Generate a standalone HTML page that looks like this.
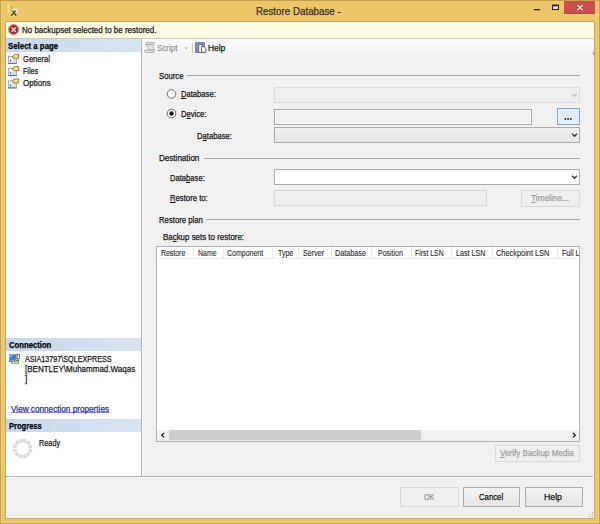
<!DOCTYPE html>
<html><head><meta charset="utf-8">
<style>
*{margin:0;padding:0;box-sizing:border-box}
html,body{width:600px;height:524px;overflow:hidden;background:#edc66a}
body{position:relative;font-family:"Liberation Sans",sans-serif}
.a{position:absolute}
.tx{position:absolute;white-space:nowrap;line-height:1;-webkit-text-stroke:0.25px currentColor;transform-origin:0 0;font-family:"Liberation Sans",sans-serif}
u{text-decoration:underline;text-underline-offset:1px}
</style></head><body>
<!-- frame -->
<div class="a" style="left:0;top:0;width:600px;height:524px;border:1px solid #c4a04c;background:#edc66a"></div>
<div class="a" style="left:1px;top:1px;width:598px;height:522px;border:1px solid #f1cf78;border-top:none"></div>
<div class="a" style="left:5px;top:21px;width:590px;height:498px;border:1px solid #c2a872"></div>
<!-- window buttons -->
<div class="a" style="left:564px;top:1px;width:31px;height:13px;background:#c94e4c;border-bottom:1px solid #b8443c"></div>
<svg class="a" style="left:0;top:0" width="600" height="21">
  <path d="M577.6 5.2 L582.6 10.2 M582.6 5.2 L577.6 10.2" stroke="#fff" stroke-width="1.1"/>
  <rect x="552.5" y="5.3" width="6" height="4.3" fill="#f2dc9a" stroke="#1e1a14" stroke-width="1"/>
  <rect x="552" y="4.7" width="7" height="1.5" fill="#1e1a14"/>
  <rect x="534" y="9" width="6" height="1.3" fill="#1e1a14"/>
  <!-- app icon -->
  <rect x="7.4" y="4.6" width="5.2" height="7.6" rx="1" fill="#f4e08e"/>
  <rect x="10.2" y="5" width="2.4" height="7" fill="#d9b848"/>
  <circle cx="15.2" cy="10.6" r="2.7" fill="#e6e4d8" opacity="0.85"/>
  <path d="M11.2 15.6 L15.6 10.6 M12.6 10.8 L16.2 15.6" stroke="#3a3024" stroke-width="1.1"/>
</svg>
<!-- content -->
<div class="a" style="left:6px;top:22px;width:588px;height:496px;background:#f0f0f0"></div>
<!-- message bar -->
<div class="a" style="left:6px;top:22px;width:588px;height:16px;background:#fefde2"></div>
<div class="a" style="left:6px;top:38px;width:588px;height:1px;background:#c8c8c0"></div>
<svg class="a" style="left:7px;top:23px" width="14" height="14">
  <circle cx="6.6" cy="6.6" r="5.1" fill="#a8262f" stroke="#cf9a9a" stroke-width="1.1"/>
  <path d="M4.5 4.5 L8.7 8.7 M8.7 4.5 L4.5 8.7" stroke="#fbe6e6" stroke-width="1.3"/>
</svg>
<!-- left panel -->
<div class="a" style="left:6px;top:39px;width:135px;height:437px;background:#fff"></div>
<div class="a" style="left:141px;top:39px;width:1px;height:437px;background:#b4b4b4"></div>
<div class="a" style="left:142px;top:58px;width:1px;height:418px;background:#f8f8f8"></div>
<div class="a" style="left:6px;top:39px;width:135px;height:13px;background:linear-gradient(90deg,#c8d8eb,#d9e4f1)"></div>
<div class="a" style="left:6px;top:338px;width:135px;height:13px;background:linear-gradient(90deg,#c8d8eb,#d9e4f1)"></div>
<div class="a" style="left:6px;top:419px;width:135px;height:13px;background:linear-gradient(90deg,#c8d8eb,#d9e4f1)"></div>
<!-- page icons -->
<svg class="a" style="left:0;top:0" width="142" height="476">
  <g id="pi">
    <rect x="8.5" y="56.3" width="8" height="7.2" fill="#f6f8fc" stroke="#9a9aa8" stroke-width="0.8"/>
    <rect x="9.2" y="60" width="6.6" height="2.8" fill="#d6dcec"/>
    <rect x="8.3" y="62.9" width="8.4" height="1" fill="#6a6a80"/>
    <rect x="10" y="59.5" width="1" height="2.5" fill="#7a7a90"/>
    <path d="M12 57.2 L14.2 54.6 L18.8 54.3 L18.8 58.2 L16.2 58.6 L14.6 59 Z" fill="#e2d070" stroke="#6e6020" stroke-width="0.7"/>
    <path d="M14.4 55.6 L17.6 55.5 L16.2 57.2 Z" fill="#fff6b0"/>
  </g>
  <use href="#pi" y="12.2"/>
  <use href="#pi" y="24.5"/>
  <!-- selected highlight around General -->
  <rect x="21" y="54.5" width="30" height="9.5" fill="none" stroke="#e8eef4" stroke-width="0.8"/>
  <!-- connection icon -->
  <defs><linearGradient id="mg" x1="0" y1="0" x2="1" y2="1"><stop offset="0" stop-color="#9cc0f4"/><stop offset="0.5" stop-color="#3f74d4"/><stop offset="1" stop-color="#6890d8"/></linearGradient></defs>
  <rect x="9.6" y="354.4" width="6.6" height="5.8" fill="url(#mg)" stroke="#6a86b8" stroke-width="0.6"/>
  <rect x="9.4" y="360.2" width="7.2" height="1.5" fill="#eef0f6" stroke="#50505a" stroke-width="0.6"/>
  <rect x="17.1" y="354.3" width="2.5" height="4.6" fill="#fafafa" stroke="#4a4a4a" stroke-width="0.7"/>
  <path d="M11.6 361.8 L11.6 363.2 L18.6 363.2 L18.6 359.6" fill="none" stroke="#4aa84a" stroke-width="1"/>
  <circle cx="17.8" cy="360.4" r="0.9" fill="#2a7a2a"/>
  <!-- spinner -->
  <circle cx="22.6" cy="448.6" r="8" fill="none" stroke="#d9d9d9" stroke-width="3.8" stroke-dasharray="3.29 0.9" transform="rotate(-86.8 22.6 448.6)"/>
</svg>
<!-- toolbar -->
<div class="a" style="left:142px;top:39px;width:452px;height:19px;background:linear-gradient(#fdfdfd,#f0f0f0)"></div>
<svg class="a" style="left:140px;top:38px" width="100" height="20">
  <!-- script icon -->
  <path d="M5.6 6.2 L12 6.2 L14.6 12 L9.6 12 Z" fill="#e6e6e6" stroke="#ababab" stroke-width="0.9"/>
  <rect x="6.2" y="4.4" width="8.4" height="2.2" rx="1.1" fill="#e2e2e2" stroke="#a4a4a4" stroke-width="0.9"/>
  <rect x="4.4" y="12" width="9.8" height="2.4" rx="1.2" fill="#e2e2e2" stroke="#a4a4a4" stroke-width="0.9"/>
  <path d="M44.5 9.5 L48 9.5 L46.25 11.2 Z" fill="#a0a0a0"/>
  <rect x="52" y="5" width="1" height="9.7" fill="#c4c4c4"/>
  <!-- help icon -->
  <rect x="55.6" y="4.6" width="8.8" height="10" fill="#8c8ccc" stroke="#6a6aa8" stroke-width="0.8"/>
  <rect x="58.8" y="6.4" width="3.6" height="8" fill="#fff" stroke="#505070" stroke-width="0.7"/>
  <path d="M61.5 8.6 L64 8.6 L65.8 10.4 L65.8 14.4 L61.5 14.4 Z" fill="#f4f4fa" stroke="#404060" stroke-width="0.8"/>
</svg>
<!-- section lines -->
<div class="a" style="left:187px;top:75px;width:393px;height:1px;background:#a8a8a8"></div>
<div class="a" style="left:203.5px;top:158px;width:376px;height:1px;background:#a8a8a8"></div>
<div class="a" style="left:207px;top:219px;width:373px;height:1px;background:#a8a8a8"></div>
<!-- radios -->
<svg class="a" style="left:160px;top:85px" width="20" height="40">
  <circle cx="11.5" cy="9" r="4.3" fill="#fff" stroke="#5c5c5c" stroke-width="0.9"/>
  <circle cx="11.5" cy="28.5" r="4.3" fill="#fff" stroke="#5c5c5c" stroke-width="0.9"/>
  <circle cx="11.5" cy="28.5" r="2.2" fill="#1a1a1a"/>
</svg>
<!-- source controls -->
<div class="a" style="left:274px;top:87px;width:306px;height:16px;border:1px solid #dadada;background:#efefef"></div>
<svg class="a" style="left:570px;top:91px" width="10" height="8"><path d="M2.1 2.7 L4.5 5.3 L6.9 2.7" fill="none" stroke="#bdbdbd" stroke-width="1.2"/></svg>
<div class="a" style="left:274px;top:109px;width:258px;height:16px;border:1px solid #a9a9a9;background:#f0f0f0;box-shadow:inset 0 0 0 1px #fff"></div>
<div class="a" style="left:557px;top:108px;width:23px;height:17px;border:1px solid #8aa4bc;background:#e3edf9"></div>
<svg class="a" style="left:560px;top:114px" width="16" height="8"><g fill="#2a2a2a"><rect x="4.7" y="4" width="1.4" height="2"/><rect x="7.4" y="4" width="1.4" height="2"/><rect x="10.1" y="4" width="1.4" height="2"/></g></svg>
<div class="a" style="left:274px;top:127px;width:306px;height:16px;border:1px solid #acacac;background:linear-gradient(#f0f0f0,#e5e5e5)"></div>
<svg class="a" style="left:570px;top:131px" width="10" height="8"><path d="M2.1 2.7 L4.5 5.3 L6.9 2.7" fill="none" stroke="#333" stroke-width="1.3"/></svg>
<!-- destination controls -->
<div class="a" style="left:274px;top:169px;width:306px;height:16px;border:1px solid #acacac;background:#fff"></div>
<svg class="a" style="left:570px;top:173px" width="10" height="8"><path d="M2.1 2.7 L4.5 5.3 L6.9 2.7" fill="none" stroke="#333" stroke-width="1.3"/></svg>
<div class="a" style="left:274px;top:190px;width:213px;height:16px;border:1px solid #d5d5d5;background:#efefef"></div>
<div class="a" style="left:521px;top:189.5px;width:59px;height:17px;border:1px solid #d9d9d9;background:#efefef"></div>
<!-- grid -->
<div class="a" style="left:156px;top:246px;width:424px;height:196px;border:1px solid #b2b2b2;background:#fff"></div>
<div class="a" style="left:157px;top:247px;width:422px;height:12px;border-bottom:1px solid #ececec;background:#fff"></div>
<div class="a" style="left:193px;top:247px;width:1px;height:11px;background:#e8e8e8"></div>
<div class="a" style="left:223px;top:247px;width:1px;height:11px;background:#e8e8e8"></div>
<div class="a" style="left:272px;top:247px;width:1px;height:11px;background:#e8e8e8"></div>
<div class="a" style="left:298px;top:247px;width:1px;height:11px;background:#e8e8e8"></div>
<div class="a" style="left:331px;top:247px;width:1px;height:11px;background:#e8e8e8"></div>
<div class="a" style="left:371px;top:247px;width:1px;height:11px;background:#e8e8e8"></div>
<div class="a" style="left:411px;top:247px;width:1px;height:11px;background:#e8e8e8"></div>
<div class="a" style="left:451px;top:247px;width:1px;height:11px;background:#e8e8e8"></div>
<div class="a" style="left:492px;top:247px;width:1px;height:11px;background:#e8e8e8"></div>
<div class="a" style="left:557px;top:247px;width:1px;height:11px;background:#e8e8e8"></div>
<div class="a" style="left:157px;top:247px;width:422px;height:13px;overflow:hidden">
  <div class="tx" style="left:404.5px;top:2px;font-size:8.5px;color:#282828;transform:scaleX(0.84);-webkit-text-stroke:0.1px currentColor">Full LSN</div>
</div>
<!-- scrollbar -->
<div class="a" style="left:157px;top:430px;width:422px;height:11px;background:#f0f0f0"></div>
<div class="a" style="left:169px;top:430px;width:252px;height:10px;background:#cdcdcd"></div>
<svg class="a" style="left:157px;top:430px" width="422" height="11">
  <path d="M7 3 L4.8 5.2 L7 7.4" fill="none" stroke="#222" stroke-width="1.3"/>
  <path d="M416 3 L418.2 5.2 L416 7.4" fill="none" stroke="#222" stroke-width="1.3"/>
</svg>
<div class="a" style="left:495px;top:445px;width:85px;height:16.5px;border:1px solid #d9d9d9;background:#efefef"></div>
<!-- bottom -->
<div class="a" style="left:6px;top:476px;width:588px;height:1px;background:#b0b0b0"></div>
<div class="a" style="left:6px;top:477px;width:588px;height:1px;background:#fafafa"></div>
<div class="a" style="left:400px;top:487px;width:58.5px;height:20px;border:1px solid #d9d9d9;background:#efefef"></div>
<div class="a" style="left:462.5px;top:487px;width:57.5px;height:20px;border:1px solid #adadad;background:linear-gradient(#f2f2f2,#e6e6e6)"></div>
<div class="a" style="left:525px;top:487px;width:58px;height:20px;border:1px solid #adadad;background:linear-gradient(#f2f2f2,#e6e6e6)"></div>
<div class="a" style="left:6px;top:517px;width:588px;height:1px;background:#fbf8e8"></div>
<div class="a" style="left:593px;top:39px;width:1px;height:479px;background:#f8f6ea"></div>
<div class="a" style="left:11px;top:412px;width:98px;height:1px;background:#8686e4"></div>
<div class="a" style="left:593px;top:52px;width:1px;height:3px;background:#9a9a9a"></div>
<!-- grip -->
<svg class="a" style="left:587px;top:511px" width="8" height="8">
  <g fill="#b4b4b4"><rect x="5" y="1" width="1" height="1"/><rect x="3" y="3" width="1" height="1"/><rect x="5" y="3" width="1" height="1"/><rect x="1" y="5" width="1" height="1"/><rect x="3" y="5" width="1" height="1"/><rect x="5" y="5" width="1" height="1"/></g>
</svg>
<div class="tx" style="left:255.60px;top:7.00px;font-size:10px;color:#3a3020;transform:scaleX(0.977);">Restore Database -</div>
<div class="tx" style="left:22.20px;top:25.00px;font-size:9.5px;color:#141414;transform:scaleX(0.840);">No backupset selected to be restored.</div>
<div class="tx" style="left:8.40px;top:41.00px;font-size:9.5px;font-weight:bold;color:#000;transform:scaleX(0.826);">Select a page</div>
<div class="tx" style="left:22.80px;top:54.00px;font-size:9.5px;color:#141414;transform:scaleX(0.796);">General</div>
<div class="tx" style="left:22.80px;top:66.00px;font-size:9.5px;color:#141414;transform:scaleX(0.744);">Files</div>
<div class="tx" style="left:22.80px;top:78.00px;font-size:9.5px;color:#141414;transform:scaleX(0.849);">Options</div>
<div class="tx" style="left:8.60px;top:340.00px;font-size:9.5px;font-weight:bold;color:#000;transform:scaleX(0.809);">Connection</div>
<div class="tx" style="left:24.60px;top:354.00px;font-size:9.5px;color:#141414;transform:scaleX(0.756);">ASIA13797\SQLEXPRESS</div>
<div class="tx" style="left:24.60px;top:364.00px;font-size:9.5px;color:#141414;transform:scaleX(0.844);">[BENTLEY\Muhammad.Waqas</div>
<div class="tx" style="left:24.60px;top:374.00px;font-size:9.5px;color:#141414;transform:scaleX(0.880);">]</div>
<div class="tx" style="left:10.90px;top:404.00px;font-size:9.5px;color:#2e2e96;transform:scaleX(0.861);">View connection properties</div>
<div class="tx" style="left:8.50px;top:421.00px;font-size:9.5px;font-weight:bold;color:#000;transform:scaleX(0.795);">Progress</div>
<div class="tx" style="left:38.70px;top:438.00px;font-size:9.5px;color:#141414;transform:scaleX(0.769);">Ready</div>
<div class="tx" style="left:156.70px;top:43.00px;font-size:9.5px;color:#959595;transform:scaleX(0.844);">Script</div>
<div class="tx" style="left:208.30px;top:43.00px;font-size:9.5px;color:#141414;transform:scaleX(0.883);">Help</div>
<div class="tx" style="left:158.70px;top:71.00px;font-size:9.5px;color:#141414;transform:scaleX(0.815);">Source</div>
<div class="tx" style="left:180.50px;top:89.00px;font-size:9.5px;color:#141414;transform:scaleX(0.802);"><u>D</u>atabase:</div>
<div class="tx" style="left:180.50px;top:109.00px;font-size:9.5px;color:#141414;transform:scaleX(0.799);">D<u>e</u>vice:</div>
<div class="tx" style="left:196.80px;top:131.00px;font-size:9.5px;color:#141414;transform:scaleX(0.806);">D<u>a</u>tabase:</div>
<div class="tx" style="left:158.90px;top:153.00px;font-size:9.5px;color:#141414;transform:scaleX(0.849);">Destination</div>
<div class="tx" style="left:169.80px;top:173.00px;font-size:9.5px;color:#141414;transform:scaleX(0.802);">Data<u>b</u>ase:</div>
<div class="tx" style="left:169.80px;top:193.00px;font-size:9.5px;color:#141414;transform:scaleX(0.812);"><u>R</u>estore to:</div>
<div class="tx" style="left:158.90px;top:215.00px;font-size:9.5px;color:#141414;transform:scaleX(0.814);">Restore plan</div>
<div class="tx" style="left:162.80px;top:232.00px;font-size:9.5px;color:#141414;transform:scaleX(0.834);">Ba<u>c</u>kup sets to restore:</div>
<div class="tx" style="left:160.50px;top:249.00px;font-size:8.5px;color:#282828;transform:scaleX(0.816);-webkit-text-stroke:0.1px currentColor;">Restore</div>
<div class="tx" style="left:197.50px;top:249.00px;font-size:8.5px;color:#282828;transform:scaleX(0.817);-webkit-text-stroke:0.1px currentColor;">Name</div>
<div class="tx" style="left:227.00px;top:249.00px;font-size:8.5px;color:#282828;transform:scaleX(0.824);-webkit-text-stroke:0.1px currentColor;">Component</div>
<div class="tx" style="left:277.50px;top:249.00px;font-size:8.5px;color:#282828;transform:scaleX(0.829);-webkit-text-stroke:0.1px currentColor;">Type</div>
<div class="tx" style="left:302.50px;top:249.00px;font-size:8.5px;color:#282828;transform:scaleX(0.843);-webkit-text-stroke:0.1px currentColor;">Server</div>
<div class="tx" style="left:335.00px;top:249.00px;font-size:8.5px;color:#282828;transform:scaleX(0.852);-webkit-text-stroke:0.1px currentColor;">Database</div>
<div class="tx" style="left:377.50px;top:249.00px;font-size:8.5px;color:#282828;transform:scaleX(0.819);-webkit-text-stroke:0.1px currentColor;">Position</div>
<div class="tx" style="left:414.75px;top:249.00px;font-size:8.5px;color:#282828;transform:scaleX(0.808);-webkit-text-stroke:0.1px currentColor;">First LSN</div>
<div class="tx" style="left:456.00px;top:249.00px;font-size:8.5px;color:#282828;transform:scaleX(0.844);-webkit-text-stroke:0.1px currentColor;">Last LSN</div>
<div class="tx" style="left:496.00px;top:249.00px;font-size:8.5px;color:#282828;transform:scaleX(0.870);-webkit-text-stroke:0.1px currentColor;">Checkpoint LSN</div>
<div class="tx" style="left:531.00px;top:193.00px;font-size:9.5px;color:#a0a0a0;transform:scaleX(0.873);"><u>T</u>imeline...</div>
<div class="tx" style="left:499.70px;top:448.00px;font-size:9.5px;color:#a0a0a0;transform:scaleX(0.853);"><u>V</u>erify Backup Media</div>
<div class="tx" style="left:423.80px;top:492.00px;font-size:9.5px;color:#8e8e8e;transform:scaleX(0.758);">OK</div>
<div class="tx" style="left:479.30px;top:492.00px;font-size:9.5px;color:#141414;transform:scaleX(0.815);">Cancel</div>
<div class="tx" style="left:544.00px;top:492.00px;font-size:9.5px;color:#141414;transform:scaleX(0.919);">Help</div>
</body></html>
